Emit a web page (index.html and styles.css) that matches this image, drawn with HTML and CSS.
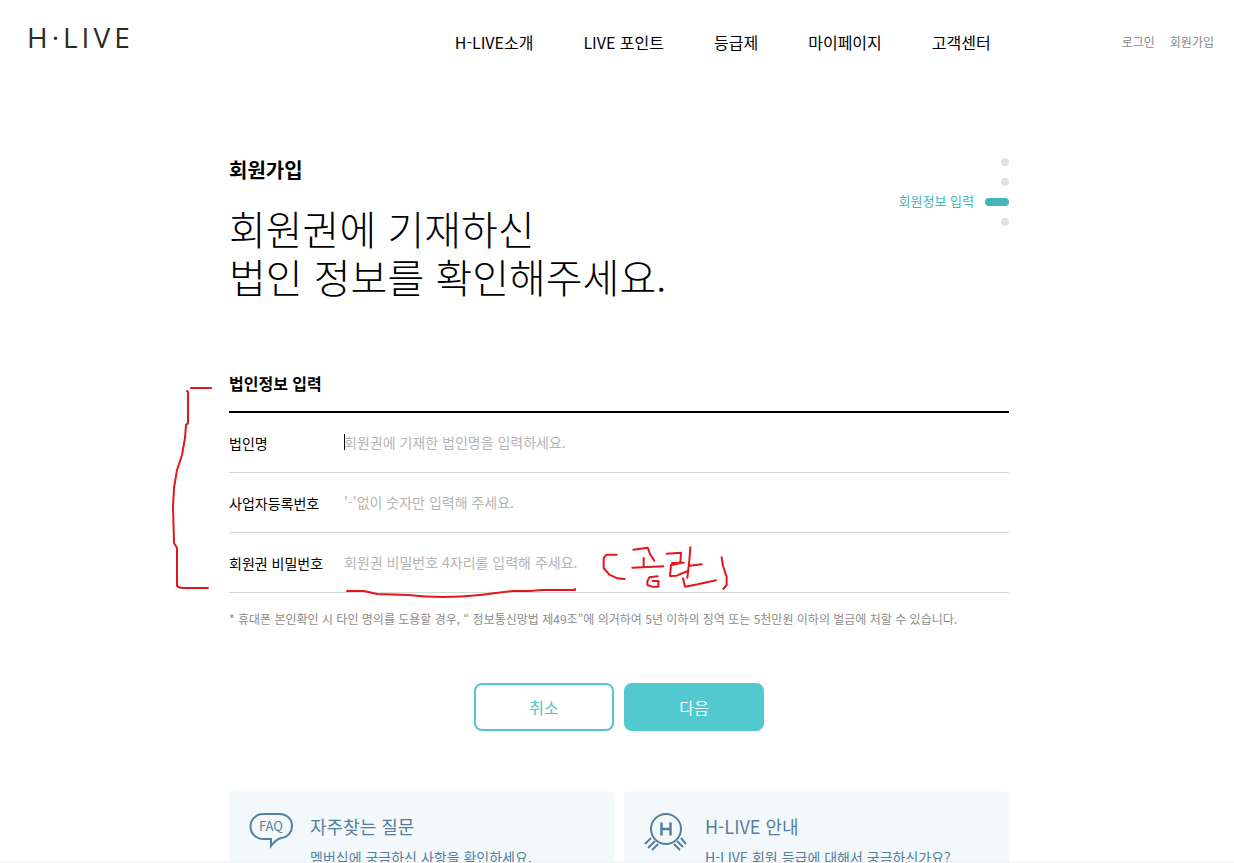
FILE: index.html
```html
<!DOCTYPE html>
<html lang="ko">
<head>
<meta charset="utf-8">
<meta name="viewport" content="width=device-width, initial-scale=1">
<title>H·LIVE 회원가입</title>
<link rel="stylesheet" href="styles.css">
</head>
<body>
<div class="page">
  <header class="header">
    <a class="logo" href="#">H·LIVE</a>
    <nav class="nav">
      <a href="#">H-LIVE소개</a>
      <a href="#">LIVE 포인트</a>
      <a href="#">등급제</a>
      <a href="#">마이페이지</a>
      <a href="#">고객센터</a>
    </nav>
    <div class="util">
      <a href="#">로그인</a>
      <a href="#">회원가입</a>
    </div>
  </header>

  <main class="main">
    <div class="intro">
      <div>
        <h1 class="intro-title">회원가입</h1>
        <p class="intro-lead">회원권에 기재하신<br>법인 정보를 확인해주세요.</p>
      </div>
      <ol class="steps">
        <li></li>
        <li></li>
        <li class="current"><span>회원정보 입력</span></li>
        <li></li>
      </ol>
    </div>

    <form class="form">
      <h2 class="form-title">법인정보 입력</h2>
      <div class="row">
        <label for="corp-name">법인명</label>
        <div class="field">
          <span class="caret"></span>
          <input id="corp-name" type="text" placeholder="회원권에 기재한 법인명을 입력하세요.">
        </div>
      </div>
      <div class="row">
        <label for="corp-no">사업자등록번호</label>
        <div class="field">
          <input id="corp-no" type="text" placeholder="'-'없이 숫자만 입력해 주세요.">
        </div>
      </div>
      <div class="row">
        <label for="member-pw">회원권 비밀번호</label>
        <div class="field">
          <input id="member-pw" type="password" placeholder="회원권 비밀번호 4자리를 입력해 주세요.">
        </div>
      </div>
      <p class="note">* 휴대폰 본인확인 시 타인 명의를 도용할 경우, “ 정보통신망법 제49조”에 의거하여 5년 이하의 징역 또는 5천만원 이하의 벌금에 처할 수 있습니다.</p>
      <div class="actions">
        <button class="btn btn-line" type="button">취소</button>
        <button class="btn btn-fill" type="button">다음</button>
      </div>

      <svg class="marks" viewBox="160 372 600 240" width="600" height="240" aria-hidden="true">
        <path d="M191 388H211"/>
        <path d="M187 391L188 392V423L186 425L185 438L182 455L177 470L174 488L173 507L174 543L177 548L177 586Q179 588 183 588L208 588"/>
        <path d="M347 591L364 591L377 594L408 595Q425 597 443 597T480 595L513 591L530 591L542 590L575 590V589"/>
        <g transform="translate(580 530) scale(.3333)">
          <path d="M110 74H80L71 84V114L88 134L112 145L134 147"/>
          <path d="M160 59L203 53L210 72L223 92M191 84V107M157 113L250 109M233 139L208 142L202 154V165L216 170H235V153H218"/>
          <path d="M260 71L303 68L301 100L273 105L270 138L290 137L323 123M276 99L311 98M331 52L328 92L322 143M330 107L365 103M309 145L315 170L353 163L408 151"/>
          <path d="M425 82L429 108L440 140V165L430 177"/>
        </g>
      </svg>
    </form>

    <div class="cards">
      <a class="card" href="#">
        <svg class="card-icon" viewBox="0 0 46 42" width="46" height="42" aria-hidden="true">
          <path d="M15 3H31A12 12 0 0 1 33 27C29 28 26 31 23 35V28H15A12 12 0 0 1 15 3Z"/>
          <text x="23" y="20" class="faq-text">FAQ</text>
        </svg>
        <span class="card-body">
          <strong>자주찾는 질문</strong>
          <span>멤버십에 궁금하신 사항을 확인하세요.</span>
        </span>
      </a>
      <a class="card" href="#">
        <svg class="card-icon" viewBox="0 0 46 42" width="46" height="42" aria-hidden="true">
          <circle cx="23" cy="18" r="15"/>
          <path class="bold" d="M18.500 11.500V24.500M27.500 11.500V24.500M18.500 18H27.500"/>
          <path d="M8 27L2 33M12 30L5 37M15 33L9 39M38 27L43 33M34 30L40 36M31 33L37 39"/>
        </svg>
        <span class="card-body">
          <strong>H-LIVE 안내</strong>
          <span>H-LIVE 회원 등급에 대해서 궁금하신가요?</span>
        </span>
      </a>
    </div>
  </main>
</div>
</body>
</html>
```
FILE: styles.css
```css
* {
  box-sizing: border-box;
}

body {
  margin: 0;
  background: #fff;
  color: #000;
  font-family: "Noto Sans CJK KR", sans-serif;
  font-size: 14px;
}

a {
  color: inherit;
  text-decoration: none;
}

h1, h2, p, ol {
  margin: 0;
  padding: 0;
}

.page {
  height: 100vh;
  overflow: hidden auto;
  scrollbar-width: none;
  border-bottom: 1px solid #f0f0f0;
}

.header {
  display: flex;
  align-items: center;
  height: 84px;
  padding: 0 20px 0 27px;
}

.logo {
  padding-bottom: 10px;
  font-family: "Open Sans", sans-serif;
  font-size: 28px;
  line-height: 40px;
  letter-spacing: 4px;
  color: #2a2a2a;
}

.nav {
  display: flex;
  gap: 50px;
  margin-left: auto;
  margin-right: 131px;
  font-size: 16px;
  line-height: 24px;
}

.util {
  display: flex;
  gap: 15px;
  font-size: 12px;
  line-height: 18px;
  color: #888;
}

.main {
  max-width: 784px;
  margin: 0 auto;
  padding: 68px 0 60px 4px;
}

.intro {
  display: flex;
  justify-content: space-between;
}

.intro-title {
  padding-top: 4px;
  font-size: 20px;
  line-height: 28px;
  font-weight: 700;
}

.intro-lead {
  margin-top: 20px;
  font-size: 40px;
  line-height: 48px;
  font-weight: 300;
}

.steps {
  list-style: none;
  font-size: 13px;
  color: #45b5bc;
}

.steps li {
  display: flex;
  align-items: center;
  justify-content: flex-end;
  gap: 11px;
  height: 20px;
}

.steps span {
  padding-bottom: 4px;
}

.steps li::after {
  content: "";
  width: 8px;
  height: 8px;
  border-radius: 4px;
  background: #e2e2e2;
}

.steps .current::after {
  width: 24px;
  background: #45b5bc;
}

.form {
  position: relative;
  margin-top: 72px;
}

.form-title {
  padding-bottom: 17px;
  border-bottom: 2px solid #000;
  font-size: 16px;
  line-height: 22px;
  font-weight: 700;
}

.row {
  display: flex;
  align-items: center;
  height: 60px;
  border-bottom: 1px solid #d9d9d9;
}

.row label {
  flex: 0 0 115px;
  line-height: 20px;
}

.field {
  position: relative;
  flex: 1;
}

.field input {
  display: block;
  width: 100%;
  height: 40px;
  padding: 0 0 2px;
  border: 0;
  outline: 0;
  background: none;
  color: #000;
  font: inherit;
}

.field input::placeholder {
  color: #b4b4b4;
  opacity: 1;
}

.caret {
  position: absolute;
  left: 0;
  top: 11px;
  width: 1px;
  height: 16px;
  background: #000;
}

.note {
  margin-top: 17px;
  font-size: 12px;
  line-height: 18px;
  color: #8c8c8c;
}

.actions {
  display: flex;
  justify-content: center;
  gap: 10px;
  margin-top: 55px;
}

.btn {
  width: 140px;
  height: 48px;
  padding: 0;
  border: 2px solid #52c8cf;
  border-radius: 8px;
  font: inherit;
  font-size: 16px;
}

.btn-line {
  background: #fff;
  color: #52c0c7;
}

.btn-fill {
  background: #52c8cf;
  color: #fff;
}

.marks {
  position: absolute;
  left: -69px;
  top: 0;
  pointer-events: none;
  fill: none;
  stroke: #e3171b;
  stroke-width: 2;
  stroke-linecap: round;
  stroke-linejoin: round;
}

.marks g {
  stroke-width: 6;
}

.cards {
  display: grid;
  grid-template-columns: 1fr 1fr;
  gap: 10px;
  margin-top: 60px;
}

.card {
  display: flex;
  gap: 16px;
  min-height: 110px;
  padding: 20px 20px 20px 19px;
  border-radius: 5px;
  background: #f3f8fb;
  color: #557f9d;
}

.card-icon {
  flex: none;
  fill: none;
  stroke: #557f9d;
  stroke-width: 2;
}

.card-icon .bold {
  stroke-width: 2.5;
}

.faq-text {
  fill: #557f9d;
  stroke: none;
  font-size: 13px;
  text-anchor: middle;
}

.card-body {
  display: flex;
  flex-direction: column;
  gap: 8px;
  padding-top: 2px;
  line-height: 20px;
}

.card-body strong {
  font-size: 18px;
  line-height: 26px;
  font-weight: 400;
}
```
